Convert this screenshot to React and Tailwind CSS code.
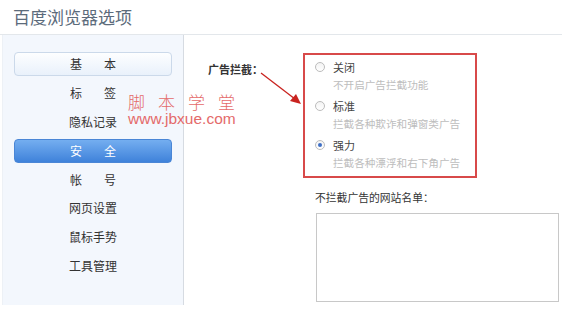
import React from "react";

const menu = [
  { name: ["基", "本"], style: "light" },
  { name: ["标", "签"] },
  { name: ["隐私记录"] },
  { name: ["安", "全"], style: "active" },
  { name: ["帐", "号"] },
  { name: ["网页设置"] },
  { name: ["鼠标手势"] },
  { name: ["工具管理"] },
];

const options = [
  { label: "关闭", desc: "不开启广告拦截功能", checked: false },
  { label: "标准", desc: "拦截各种欺诈和弹窗类广告", checked: false },
  { label: "强力", desc: "拦截各种漂浮和右下角广告", checked: true },
];

function MenuItem({ item }) {
  let box = "h-[24px] mx-[11px] flex items-center justify-center rounded-[4px]";
  let text = "text-[#333]";
  if (item.style === "light") {
    box += " border border-[#cbd9ea] bg-gradient-to-b from-[#fdfeff] to-[#e9f1fb]";
  } else if (item.style === "active") {
    box += " border border-[#4a86d6] bg-gradient-to-b from-[#74aef0] to-[#3f82da]";
    text = "text-white";
  }
  return (
    <div className="h-[28.8px] flex flex-col justify-center">
      <div className={box}>
        {item.name.length === 2 ? (
          <div className={"w-[46px] flex justify-between text-[12px] leading-[14px] " + text}>
            <span>{item.name[0]}</span>
            <span>{item.name[1]}</span>
          </div>
        ) : (
          <div className={"text-[12px] leading-[14px] " + text}>{item.name[0]}</div>
        )}
      </div>
    </div>
  );
}

function Radio({ checked }) {
  return (
    <div className="w-[10px] h-[10px] rounded-full border border-[#bcbcbc] bg-gradient-to-b from-[#f4f4f4] to-white flex items-center justify-center">
      {checked && <div className="w-[4px] h-[4px] rounded-full bg-[#3f6fc4]" />}
    </div>
  );
}

export default function App() {
  return (
    <div className="relative w-[562px] h-[309px] bg-white overflow-hidden font-['Noto_Sans_CJK_SC','Microsoft_YaHei',sans-serif]">
      <div className="h-[35px] border-b border-[#e3e7eb] pl-[13px] pt-[6px]">
        <h1 className="text-[17px] leading-[22px] text-[#5c6b7b]">百度浏览器选项</h1>
      </div>

      <div className="flex">
        <div className="ml-[2px] w-[182px] h-[270px] bg-[#f3f7fd] border-r border-[#d6dbe2] border-l border-l-[#edf1f6] pt-[15px]">
          {menu.map((item, i) => (
            <MenuItem key={i} item={item} />
          ))}
        </div>

        <div className="flex-1 pt-[18px] pl-[24px]">
          <div className="flex">
            <div className="w-[95px] pt-[9px] text-[11px] leading-[14px] font-bold text-[#333] whitespace-nowrap">广告拦截：</div>
            <div>
              <div className="w-[174px] h-[125px] border-2 border-[#d84a4a] pt-[3px] pl-[10px]">
                {options.map((o, i) => (
                  <div key={i} className="mb-[3px]">
                    <div className="h-[18px] flex items-center gap-[8px]">
                      <Radio checked={o.checked} />
                      <span className="text-[11px] text-[#444] whitespace-nowrap">{o.label}</span>
                    </div>
                    <div className="h-[18px] flex items-center pl-[18px] text-[10.6px] text-[#bdbdbd] whitespace-nowrap">{o.desc}</div>
                  </div>
                ))}
              </div>
              <div className="ml-[12px] mt-[12px] text-[10.8px] leading-[14px] text-[#333] whitespace-nowrap">不拦截广告的网站名单：</div>
              <div className="ml-[13px] mt-[9px] w-[243px] h-[89px] border border-[#c8c8c8] bg-white" />
            </div>
          </div>
        </div>
      </div>

      <svg className="absolute left-0 top-0" width="562" height="309">
        <line x1="261" y1="73" x2="295" y2="99" stroke="#c9231f" strokeWidth="1.3" />
        <polygon points="301,104 290,101 296,94" fill="#c9231f" />
      </svg>

      <div className="absolute left-[128px] top-[93px] text-[#e46a6a] pointer-events-none">
        <div className="flex gap-[13px] text-[17px] leading-[18px] font-light">
          <span>脚</span>
          <span>本</span>
          <span>学</span>
          <span>堂</span>
        </div>
        <div className="font-['Liberation_Sans',sans-serif] text-[15.5px] leading-[15px]">www.jbxue.com</div>
      </div>
    </div>
  );
}
